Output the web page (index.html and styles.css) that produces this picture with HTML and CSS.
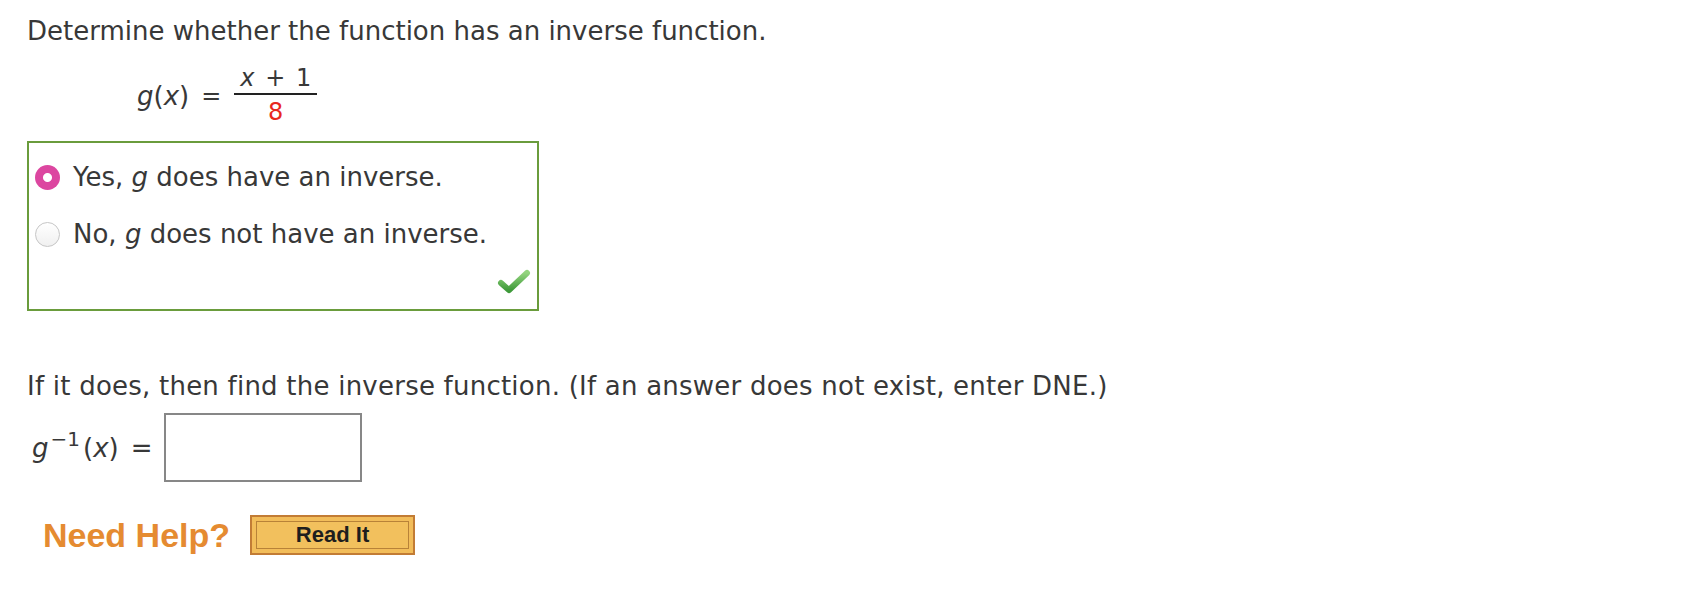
FILE: index.html
```html
<!DOCTYPE html>
<html>
<head>
<meta charset="utf-8">
<link rel="stylesheet" href="styles.css">
</head>
<body>
<div class="page">
  <p class="q">Determine whether the function has an inverse function.</p>
  <div class="formula">
    <span class="lhs"><i>g</i>(<i>x</i>)</span>
    <span class="eq">=</span>
    <span class="frac">
      <span class="num"><i>x</i> + 1</span>
      <span class="den">8</span>
    </span>
  </div>
  <div class="choices">
    <div class="opt"><span class="radio on"></span><span class="label">Yes, <i>g</i> does have an inverse.</span></div>
    <div class="opt"><span class="radio"></span><span class="label">No, <i>g</i> does not have an inverse.</span></div>
    <div class="mark">
      <svg class="check" width="34" height="26" viewBox="0 0 34 26">
        <defs>
          <linearGradient id="cg" x1="0" y1="0" x2="0" y2="1">
            <stop offset="0" stop-color="#93d47e"/>
            <stop offset="1" stop-color="#3f9a3a"/>
          </linearGradient>
        </defs>
        <path d="M4 15 L12 22 L30 5" fill="none" stroke="url(#cg)" stroke-width="6" stroke-linecap="round" stroke-linejoin="round"/>
      </svg>
    </div>
  </div>
  <p class="q2">If it does, then find the inverse function. (If an answer does not exist, enter DNE.)</p>
  <div class="ans">
    <span class="lhs"><i>g</i><sup>−1</sup>(<i>x</i>)</span>
    <span class="eq">=</span>
    <span class="input"></span>
  </div>
  <div class="help">
    <span class="need">Need Help?</span>
    <span class="btn"><span class="btn-in">Read It</span></span>
  </div>
</div>
</body>
</html>
```
FILE: styles.css
```css
html, body {
  margin: 0;
  padding: 0;
  background: #ffffff;
}
.page {
  padding: 16px 0 0 27px;
  font-family: "DejaVu Sans", Verdana, sans-serif;
  font-size: 26px;
  color: #383838;
}
.q, .q2 {
  margin: 0;
  line-height: 31px;
}
i {
  font-style: italic;
}
.formula {
  display: flex;
  align-items: center;
  margin: 18px 0 0 110px;
  font-size: 24px;
}
.formula .lhs {
  font-size: 26px;
}
.formula .eq {
  margin: 0 13px 0 12px;
}
.frac {
  display: flex;
  flex-direction: column;
  align-items: center;
}
.num {
  padding: 0 6px 2px;
  border-bottom: 2px solid #222;
  line-height: 26px;
  word-spacing: 3px;
}
.den {
  color: #e8281e;
  line-height: 28px;
  padding-top: 3px;
}
.choices {
  margin-top: 15px;
  width: 512px;
  height: 170px;
  border: 2px solid #6a9c3c;
  box-sizing: border-box;
  display: flex;
  flex-direction: column;
  padding: 18px 0 0 6px;
  gap: 25px;
  position: relative;
}
.opt {
  display: flex;
  align-items: center;
  height: 32px;
}
.radio {
  width: 25px;
  height: 25px;
  border-radius: 50%;
  box-sizing: border-box;
  border: 1px solid #c6c6c6;
  background: linear-gradient(#ffffff, #f0f0f0);
  margin-right: 13px;
  flex: none;
}
.radio.on {
  border: none;
  background: radial-gradient(circle, #ffffff 0 4px, #dc46a0 5px);
}
.label {
  line-height: 32px;
}
.mark {
  position: absolute;
  right: 6px;
  bottom: 15px;
}
.check {
  display: block;
}
.q2 {
  margin-top: 60px;
  letter-spacing: 0.23px;
}
.ans {
  display: flex;
  align-items: center;
  margin: 11px 0 0 5px;
  font-size: 26px;
}
.ans sup {
  font-size: 20px;
  vertical-align: 11px;
  line-height: 0;
  margin: 0 3px 0 2px;
}
.ans .eq {
  margin: 0 11px 0 12px;
}
.input {
  width: 198px;
  height: 69px;
  box-sizing: border-box;
  border: 2px solid #878787;
  background: #fff;
}
.help {
  display: flex;
  align-items: center;
  margin: 33px 0 0 16px;
}
.need {
  font-family: "Liberation Sans", Arial, sans-serif;
  font-weight: bold;
  font-size: 34px;
  color: #e58b31;
  margin-right: 20px;
}
.btn {
  display: inline-block;
  width: 165px;
  height: 40px;
  box-sizing: border-box;
  border: 2px solid #c27c35;
  background: #f2bd5a;
  padding: 4px;
}
.btn-in {
  display: flex;
  align-items: center;
  justify-content: center;
  height: 100%;
  box-sizing: border-box;
  border: 1px solid #b88238;
  background: #f2c05d;
  font-family: "Liberation Sans", Arial, sans-serif;
  font-weight: bold;
  font-size: 22px;
  color: #1e1e1e;
}
```
